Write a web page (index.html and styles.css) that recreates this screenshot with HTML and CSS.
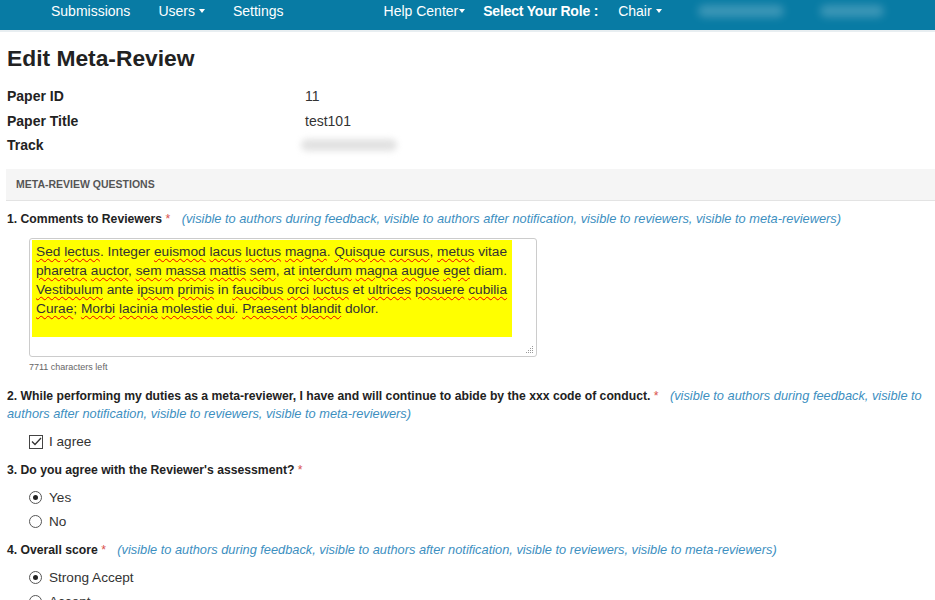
FILE: index.html
```html
<!DOCTYPE html>
<html>
<head>
<meta charset="utf-8">
<link rel="stylesheet" href="styles.css">
</head>
<body>
<nav class="topnav">
  <div class="nav-left">
    <span class="nav-item">Submissions</span>
    <span class="nav-item">Users <i class="caret"></i></span>
    <span class="nav-item">Settings</span>
  </div>
  <div class="nav-right">
    <span class="nav-item">Help Center<i class="caret tight"></i></span>
    <span class="nav-item role">Select Your Role :</span>
    <span class="nav-item">Chair <i class="caret"></i></span>
    <span class="blur-item wide"></span>
    <span class="blur-item"></span>
  </div>
</nav>

<main class="page">
  <h1 class="title">Edit Meta-Review</h1>
  <div class="info">
    <div class="info-row"><span class="info-label">Paper ID</span><span class="info-value">11</span></div>
    <div class="info-row"><span class="info-label">Paper Title</span><span class="info-value">test101</span></div>
    <div class="info-row"><span class="info-label">Track</span><span class="info-value"><span class="blur-value"></span></span></div>
  </div>

  <div class="section-head">META-REVIEW QUESTIONS</div>

  <div class="question first">
    <div class="q-label">1. Comments to Reviewers <span class="req">*</span> <span class="vis">(visible to authors during feedback, visible to authors after notification, visible to reviewers, visible to meta-reviewers)</span></div>
    <div class="textarea-box">
      <div class="ta-text"><span class="sp">Sed</span> <span class="sp">lectus</span>. Integer <span class="sp">euismod</span> <span class="sp">lacus</span> <span class="sp">luctus</span> <span class="sp">magna</span>. <span class="sp">Quisque</span> <span class="sp">cursus</span>, <span class="sp">metus</span> vitae <span class="sp">pharetra</span> <span class="sp">auctor</span>, <span class="sp">sem</span> <span class="sp">massa</span> <span class="sp">mattis</span> <span class="sp">sem</span>, at <span class="sp">interdum</span> <span class="sp">magna</span> <span class="sp">augue</span> <span class="sp">eget</span> diam. <span class="sp">Vestibulum</span> ante <span class="sp">ipsum</span> <span class="sp">primis</span> in <span class="sp">faucibus</span> <span class="sp">orci</span> <span class="sp">luctus</span> et <span class="sp">ultrices</span> <span class="sp">posuere</span> <span class="sp">cubilia</span> <span class="sp">Curae</span>; <span class="sp">Morbi</span> <span class="sp">lacinia</span> <span class="sp">molestie</span> <span class="sp">dui</span>. <span class="sp">Praesent</span> <span class="sp">blandit</span> dolor.</div>
      <svg class="grip" width="8" height="8" viewBox="0 0 8 8"><g fill="#999"><rect x="6" y="0" width="1" height="1"/><rect x="4" y="2" width="1" height="1"/><rect x="6" y="2" width="1" height="1"/><rect x="2" y="4" width="1" height="1"/><rect x="4" y="4" width="1" height="1"/><rect x="6" y="4" width="1" height="1"/><rect x="0" y="6" width="1" height="1"/><rect x="2" y="6" width="1" height="1"/><rect x="4" y="6" width="1" height="1"/><rect x="6" y="6" width="1" height="1"/></g></svg>
    </div>
    <div class="chars-left">7711 characters left</div>
  </div>

  <div class="question after-text">
    <div class="q-label">2. While performing my duties as a meta-reviewer, I have and will continue to abide by the xxx code of conduct. <span class="req">*</span> <span class="vis">(visible to authors during feedback, visible to authors after notification, visible to reviewers, visible to meta-reviewers)</span></div>
    <div class="options">
      <label class="opt"><span class="box checked"><svg width="11" height="9" viewBox="0 0 11 9"><path d="M1 4.5 L4 7.5 L10 1" fill="none" stroke="#333" stroke-width="1.3"/></svg></span>I agree</label>
    </div>
  </div>

  <div class="question">
    <div class="q-label">3. Do you agree with the Reviewer's assessment? <span class="req">*</span></div>
    <div class="options">
      <label class="opt"><span class="radio on"></span>Yes</label>
      <label class="opt"><span class="radio"></span>No</label>
    </div>
  </div>

  <div class="question">
    <div class="q-label">4. Overall score <span class="req">*</span> <span class="vis">(visible to authors during feedback, visible to authors after notification, visible to reviewers, visible to meta-reviewers)</span></div>
    <div class="options">
      <label class="opt"><span class="radio on"></span>Strong Accept</label>
      <label class="opt"><span class="radio"></span>Accept</label>
    </div>
  </div>
</main>
</body>
</html>
```

FILE: styles.css
```css
html, body {
  margin: 0;
  padding: 0;
  background: #fff;
  font-family: "Liberation Sans", Arial, sans-serif;
  color: #333;
}

.topnav {
  height: 30px;
  background: #087ba4;
  border-bottom: 2px solid #e8eef1;
  display: flex;
  align-items: flex-start;
  color: #fff;
  font-size: 14px;
  line-height: 16px;
}
.nav-left {
  display: flex;
  gap: 28px;
  padding-left: 51px;
  padding-top: 3px;
}
.nav-right {
  display: flex;
  align-items: flex-start;
  padding-left: 100px;
  padding-top: 3px;
}
.nav-item { display: inline-flex; align-items: center; white-space: nowrap; }
.nav-right .nav-item { margin-right: 18px; }
.nav-right .role { font-weight: bold; margin-right: 20px; letter-spacing: -0.2px; }
.caret {
  display: inline-block;
  width: 0; height: 0;
  border-left: 3px solid transparent;
  border-right: 3px solid transparent;
  border-top: 4px solid #fff;
  margin-left: 4px;
}
.caret.tight { margin-left: 1px; }
.blur-item {
  display: inline-block;
  width: 64px;
  height: 12px;
  margin-top: 2px;
  margin-left: 14px;
  background: rgba(255,255,255,0.22);
  border-radius: 6px;
  filter: blur(4px);
}
.blur-item.wide { width: 86px; margin-left: 18px; margin-right: 22px; }

.page { padding: 0 0 0 7px; }

.title {
  margin: 0;
  padding-top: 13px;
  font-size: 22.8px;
  line-height: 26px;
  font-weight: bold;
  color: #222;
}

.info { margin-top: 13px; }
.info-row {
  display: flex;
  font-size: 14px;
  line-height: 24.5px;
  height: 24.5px;
}
.info-label { width: 298px; font-weight: bold; color: #222; }
.info-value { color: #333; }
.blur-value {
  display: inline-block;
  width: 96px; height: 12px;
  margin-top: 6px;
  margin-left: -4px;
  background: #e2e2e2;
  border-radius: 6px;
  filter: blur(3px);
}

.section-head {
  margin-top: 11px;
  margin-left: -1px;
  height: 31px;
  line-height: 31px;
  background: #f5f5f5;
  border-bottom: 1px solid #e3e3e3;
  padding-left: 10px;
  font-size: 10.5px;
  font-weight: bold;
  color: #555;
}

.question { margin-top: 7px; }
.question.first { margin-top: 9px; }
.question.after-text { margin-top: 15px; }
.q-label {
  font-size: 12.2px;
  line-height: 18px;
  font-weight: bold;
  color: #222;
}
.req { color: #d9534f; font-weight: normal; margin-right: 8px; }
.vis { color: #3d8fbf; font-style: italic; font-weight: normal; font-size: 12.8px; }

.textarea-box {
  position: relative;
  margin: 10px 0 0 22px;
  width: 508px;
  height: 119px;
  border: 1px solid #ccc;
  border-radius: 3px;
  box-sizing: border-box;
  padding: 1px 0 0 2px;
}
.ta-text {
  width: 476px;
  background: #ffff00;
  padding: 2px 0 18px 4px;
  font-size: 13.7px;
  line-height: 19.3px;
  color: #333;
}
.sp {
  text-decoration: underline wavy #e00;
  text-decoration-thickness: 1px;
  text-underline-offset: 2px;
}
.grip { position: absolute; right: 2px; bottom: 2px; }
.chars-left {
  margin: 5px 0 0 22px;
  font-size: 9px;
  color: #666;
}

.options { padding: 7px 0 0 22px; }
.opt {
  display: flex;
  align-items: center;
  font-size: 13.6px;
  line-height: 24px;
  height: 24px;
  color: #333;
}
.box {
  width: 12px; height: 12px;
  border: 1px solid #444;
  margin-right: 6px;
  display: inline-flex;
  align-items: center;
  justify-content: center;
  background: #fff;
}
.radio {
  width: 11px; height: 11px;
  border: 1px solid #555;
  border-radius: 50%;
  margin-right: 7px;
  position: relative;
  box-sizing: content-box;
}
.radio.on::after {
  content: "";
  position: absolute;
  left: 3px; top: 3px;
  width: 5px; height: 5px;
  border-radius: 50%;
  background: #222;
}
```
